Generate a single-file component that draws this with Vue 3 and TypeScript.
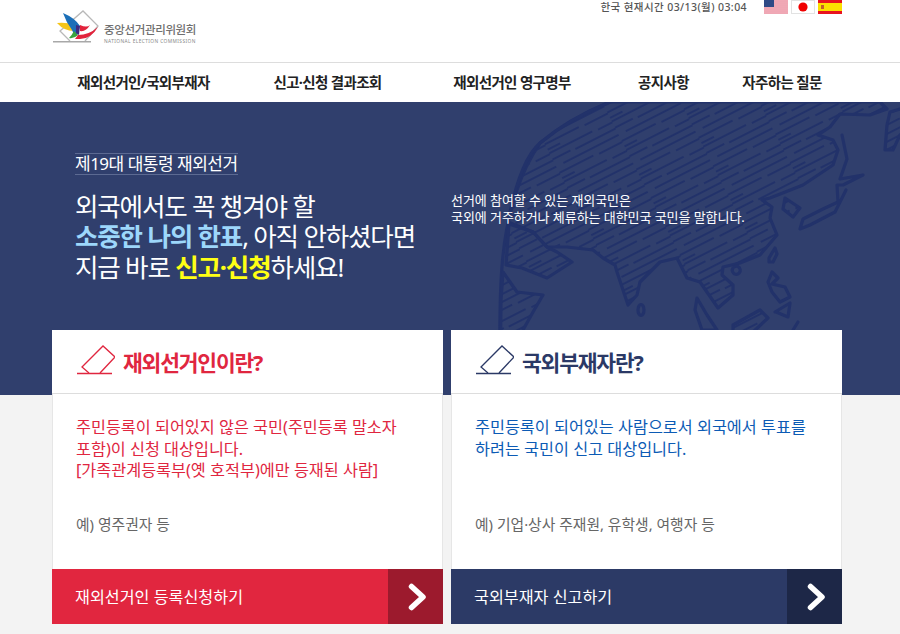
<template>
  <div class="page">
    <header class="top">
      <div class="logo">
        <svg class="logo-mark" width="46" height="36" viewBox="0 0 46 36">
          <path d="M17 33 L7 23 L30 3 L45 18 L32 33" fill="#fff" stroke="#b8b8b8" stroke-width="1.3" />
          <path d="M0 33.7 H38" stroke="#a8a8a8" stroke-width="1.4" />
          <path d="M4 15 Q14 14 20 17 L21 23 Q11 23 4 15Z" fill="#f5c518" />
          <path d="M10 5 Q22 10 27 18 L24 28 Q21 27 19 22 Q13 14 10 5Z" fill="#1b6fb8" />
          <path d="M16 30 Q19 27 21 23 L25 27 Q21 31 16 30Z" fill="#3da33d" />
          <path d="M25 27 Q36 27 45 19 Q38 31 27 31 L22 31Z" fill="#e2233c" />
          <path d="M27 17 Q34 20 37 17 Q33 24 27 23Z" fill="#e2233c" />
          <path d="M23 17 L27 18 L26 27 L23 25Z" fill="#3f2a7f" />
        </svg>
        <div class="logo-text">
          <strong>중앙선거관리위원회</strong>
          <span>NATIONAL ELECTION COMMISSION</span>
        </div>
      </div>
      <div class="util">
        <span class="clock">한국 현재시간 03/13(월) 03:04</span>
        <div class="flags">
          <svg width="24" height="14" viewBox="0 0 24 14">
            <rect width="24" height="14" fill="#fff" />
            <path d="M0 1h24M0 3h24M0 5h24M0 7h24M0 9h24M0 11h24M0 13h24" stroke="#e0506a" stroke-width="1" />
            <rect width="10" height="7" fill="#2f4a86" />
          </svg>
          <svg width="24" height="14" viewBox="0 0 24 14">
            <rect x=".5" y=".5" width="23" height="13" fill="#fff" stroke="#e2e2e2" />
            <circle cx="12" cy="7" r="4.6" fill="#f00000" />
          </svg>
          <svg width="24" height="14" viewBox="0 0 24 14">
            <rect width="24" height="14" fill="#e8131f" />
            <rect y="3" width="24" height="8" fill="#fbe000" />
            <rect x="3" y="5" width="3" height="4" fill="#c4602a" />
          </svg>
        </div>
      </div>
    </header>

    <nav class="gnb">
      <a v-for="item in menu" :key="item" class="gnb-item">{{ item }}</a>
    </nav>

    <section class="hero">
      <svg class="map" width="450" height="293" viewBox="450 102 450 293">
        <defs>
          <pattern id="hatch" width="70" height="32" patternUnits="userSpaceOnUse" patternTransform="rotate(-27)">
            <path d="M0 2H48M54 3H70M0 9H20M25 10H70M8 17H70M0 24H38M44 25H70M0 30H14" stroke="#22326a" stroke-width="1.9" />
          </pattern>
        </defs>
        <g stroke="#22326a" stroke-width="3.2" stroke-linejoin="round" stroke-linecap="round" fill="none">
          <!-- 지구 외곽선 -->
          <path d="M610 102 Q570 118 540 143 Q525 165 517 190 Q505 225 502 267 Q499 300 500 395" />
          <!-- 아시아 대륙 -->
          <path
            fill="url(#hatch)"
            d="M610 102 H880 L887 109 L870 115 L840 114 L830 127 L818 135 L833 140 L838 150 L833 165 L803 185 L770 198 L762 200 L772 207 L770 218 L777 235 L760 255 L740 263 L723 267 L722 275 L733 285 L733 295 L718 308 L700 282 L687 278 L677 258 L660 262 L640 282 L637 295 L628 305 L617 272 L615 265 L603 258 L593 250 L567 247 L547 247 L533 232 L508 222 Q520 160 540 143 Q570 118 610 102Z"
          />
          <path fill="url(#hatch)" d="M509 224 L533 232 L547 247 L557 252 L572 262 L547 278 L522 268 L506 265Z" />
          <path fill="url(#hatch)" d="M503 272 L517 292 L543 295 L533 312 L523 330 L510 395 L500 395 L501 300Z" />
          <ellipse cx="641" cy="310" rx="3" ry="5.5" />
          <!-- 일본, 한반도, 캄차카 -->
          <path d="M842 135 L847 159 L840 179 L863 175 L843 185 L837 185 L838 202 L823 209 L803 219 L800 229 L810 225 L835 212 L846 190" />
          <path fill="url(#hatch)" d="M785 198 L800 208 L793 217 L783 209Z" />
          <path d="M733 268 a4 4 0 1 0 1 -1" />
          <!-- 알래스카 -->
          <path fill="url(#hatch)" d="M900 109 L890 112 L887 125 L885 150 L893 150 L900 135" />
          <!-- 동남아 섬 -->
          <path d="M769 258 L775 248 L777 254 L773 262 L769 262Z" />
          <path d="M772 272 L778 278 L772 284 L785 287 L790 297 L780 302 L772 292 L768 282Z" />
          <path d="M775 312 L790 303 L788 317 L776 312Z" />
          <path d="M697 298 L707 315 L717 330 L702 330 L695 310Z" />
          <path fill="url(#hatch)" d="M733 325 L760 310 L768 318 L753 332 L733 332Z" />
          <path d="M793 330 L798 322" />
        </g>
      </svg>
      <div class="hero-text">
        <div class="hero-left">
          <p class="badge">제19대 대통령 재외선거</p>
          <h1>
            외국에서도 꼭 챙겨야 할<br />
            <b class="sky">소중한 나의 한표</b>, 아직 안하셨다면<br />
            지금 바로 <b class="yellow">신고·신청</b>하세요!
          </h1>
        </div>
        <p class="hero-desc">
          선거에 참여할 수 있는 재외국민은<br />
          국외에 거주하거나 체류하는 대한민국 국민을 말합니다.
        </p>
      </div>
    </section>

    <main class="cards">
      <article v-for="card in cards" :key="card.title" class="card" :class="card.tone">
        <div class="card-head">
          <svg width="38" height="30" viewBox="0 0 38 30" fill="none" stroke="currentColor" stroke-width="1.3">
            <path d="M12 28 L5 22 L26 1 L38 12 L23 28" />
            <path d="M0 28.5 H35" />
          </svg>
          <h2>{{ card.title }}</h2>
        </div>
        <div class="card-body">
          <p class="lead">
            <template v-for="line in card.lines" :key="line">{{ line }}<br /></template>
          </p>
          <p class="example">{{ card.example }}</p>
        </div>
        <a class="card-btn">
          <span class="btn-label">{{ card.action }}</span>
          <i class="arrow">
            <svg width="20" height="30" viewBox="0 0 20 30" fill="none" stroke="#fff" stroke-width="5.5" stroke-linecap="round" stroke-linejoin="round">
              <path d="M3.5 4.5 L15 15 L3.5 25.5" />
            </svg>
          </i>
        </a>
      </article>
    </main>
  </div>
</template>

<script setup lang="ts">
interface Card {
  tone: string;
  title: string;
  lines: string[];
  example: string;
  action: string;
}

const menu: string[] = [
  "재외선거인/국외부재자",
  "신고·신청 결과조회",
  "재외선거인 영구명부",
  "공지사항",
  "자주하는 질문",
];

const cards: Card[] = [
  {
    tone: "red",
    title: "재외선거인이란?",
    lines: [
      "주민등록이 되어있지 않은 국민(주민등록 말소자",
      "포함)이 신청 대상입니다.",
      "[가족관계등록부(옛 호적부)에만 등재된 사람]",
    ],
    example: "예) 영주권자 등",
    action: "재외선거인 등록신청하기",
  },
  {
    tone: "navy",
    title: "국외부재자란?",
    lines: [
      "주민등록이 되어있는 사람으로서 외국에서 투표를",
      "하려는 국민이 신고 대상입니다.",
    ],
    example: "예) 기업·상사 주재원, 유학생, 여행자 등",
    action: "국외부재자 신고하기",
  },
];
</script>

<style>
html,
body {
  margin: 0;
  background: #f3f3f3;
}
</style>

<style scoped>
.page {
  width: 900px;
  height: 634px;
  overflow: hidden;
  font-family: "Noto Sans", "Noto Sans CJK KR", sans-serif;
  color: #333;
}
p,
h1,
h2 {
  margin: 0;
  font-weight: 400;
}
.top {
  display: flex;
  justify-content: space-between;
  height: 62px;
  padding: 0 58px 0 53px;
  background: #fff;
  border-bottom: 1px solid #ddd;
}
.logo {
  display: flex;
  align-items: flex-start;
  gap: 5px;
  padding-top: 8px;
}
.logo-text {
  display: flex;
  flex-direction: column;
  padding-top: 15px;
  line-height: 1;
}
.logo-text strong {
  font-size: 11.5px;
  font-weight: 500;
  letter-spacing: -0.35px;
  line-height: 14px;
  color: #707070;
}
.logo-text span {
  font-size: 4.8px;
  line-height: 8px;
  letter-spacing: 0.42px;
  color: #888;
  white-space: nowrap;
}
.util {
  display: flex;
  gap: 17px;
  height: 14px;
}
.clock {
  font-size: 10.5px;
  line-height: 14px;
  font-weight: 500;
  color: #555;
  letter-spacing: 0.42px;
  white-space: nowrap;
}
.flags {
  display: flex;
  gap: 3px;
}
.gnb {
  display: grid;
  grid-template-columns: 183px 185px 184px 119px 118px;
  height: 39px;
  padding-left: 52px;
  background: #fff;
}
.gnb-item {
  font-size: 14.5px;
  font-weight: 700;
  line-height: 39px;
  letter-spacing: -0.65px;
  color: #222;
  text-align: center;
  white-space: nowrap;
}
.hero {
  position: relative;
  height: 293px;
  background: #303f6d;
  overflow: hidden;
}
.map {
  position: absolute;
  top: 0;
  right: 0;
}
.hero-text {
  position: relative;
  display: flex;
  padding: 51px 0 0 75px;
  color: #fff;
}
.hero-left {
  width: 376px;
}
.badge {
  display: inline-block;
  font-size: 17px;
  line-height: 20px;
  letter-spacing: -0.5px;
  border-top: 1px solid #5c6a92;
  border-bottom: 1px solid #5c6a92;
}
h1 {
  margin-top: 15.5px;
  font-size: 25.5px;
  line-height: 30.5px;
  letter-spacing: -1.15px;
}
h1 b {
  font-weight: 700;
}
.sky {
  color: #9dd7fb;
}
.yellow {
  color: #ffff14;
}
.hero-desc {
  margin-top: 39px;
  font-size: 13px;
  line-height: 16.5px;
  letter-spacing: -0.06px;
}
.cards {
  display: flex;
  gap: 8px;
  margin: -65px 0 0 52px;
  position: relative;
}
.card {
  display: flex;
  flex-direction: column;
  width: 391px;
  height: 294px;
  background: #fff;
}
.card-head {
  display: flex;
  align-items: center;
  gap: 8px;
  height: 64px;
  padding-left: 25px;
  border-bottom: 1px solid #ddd;
  box-sizing: border-box;
}
.card-head svg {
  margin-top: -3px;
}
h2 {
  font-size: 21.5px;
  font-weight: 700;
  letter-spacing: -1.2px;
}
.card-body {
  flex: 1;
  padding: 23px 23px 0;
  border: solid #e6e6e6;
  border-width: 0 1px;
}
.lead {
  font-size: 16.25px;
  line-height: 21.5px;
  white-space: nowrap;
}
.example {
  position: absolute;
  top: 184px;
  font-size: 14.8px;
  line-height: 20px;
  color: #666;
}
.red h2,
.red .card-head svg,
.red .lead {
  color: #e0263f;
}
.navy h2,
.navy .card-head svg {
  color: #2b3966;
}
.navy .lead {
  color: #0c5bb5;
}
.card-btn {
  display: flex;
  align-items: center;
  justify-content: space-between;
  height: 55px;
  padding-left: 23px;
  font-size: 16.2px;
  color: #fff;
}
.btn-label {
  padding-bottom: 2px;
}
.red .card-btn {
  background: #e1263f;
}
.navy .card-btn {
  background: #2c3a66;
}
.arrow {
  display: flex;
  align-items: center;
  justify-content: center;
  box-sizing: border-box;
  width: 55px;
  height: 55px;
  padding-left: 4px;
}
.red .arrow {
  background: #9c1a2d;
}
.navy .arrow {
  background: #1d2747;
}
</style>
